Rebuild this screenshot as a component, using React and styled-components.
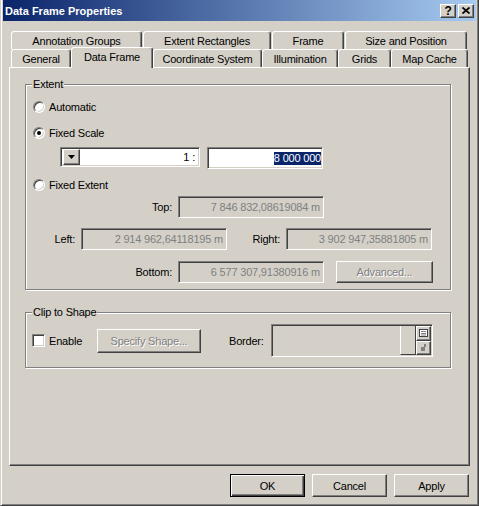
import React from 'react';
import styled, { createGlobalStyle } from 'styled-components';

const GlobalStyle = createGlobalStyle`
  html, body { margin: 0; padding: 0; background: #d4d0c8; }
  body { font-family: "Liberation Sans", Arial, sans-serif; font-size: 11px; }
`;

const Window = styled.div`
  box-sizing: border-box;
  width: 479px;
  height: 506px;
  display: flex;
  flex-direction: column;
  padding: 0 2px 2px 2px;
  background: #d4d0c8;
  border: 1px solid;
  border-top: none;
  border-color: #d4d0c8 #404040 #404040 #d4d0c8;
  box-shadow: inset 1px 0 #fff, inset -1px -1px #808080;
  font-family: "Liberation Sans", Arial, sans-serif;
  font-size: 11px;
  letter-spacing: -0.2px;
  color: #000;
`;

const TitleBar = styled.div`
  flex: none;
  height: 21px;
  display: flex;
  align-items: center;
  gap: 2px;
  padding: 0 2px;
  background: linear-gradient(to right, #0a246a, #a6caf0);
`;

const Title = styled.div`
  flex: 1;
  color: #fff;
  font-weight: bold;
  font-size: 11px;
  letter-spacing: 0;
`;

const raised = `
  border: 1px solid;
  border-color: #fff #404040 #404040 #fff;
  box-shadow: inset -1px -1px #808080, inset 1px 1px #d4d0c8;
`;

const sunken = `
  border: 1px solid;
  border-color: #808080 #fff #fff #808080;
  box-shadow: inset 1px 1px #404040, inset -1px -1px #d4d0c8;
`;

const CaptionButton = styled.div`
  box-sizing: border-box;
  width: 16px;
  height: 14px;
  background: #d4d0c8;
  ${raised}
  display: flex;
  align-items: center;
  justify-content: center;
  font-weight: bold;
  font-size: 12px;
  line-height: 12px;
`;

const TabStrip = styled.div`
  flex: none;
  margin-top: 10px;
  padding-left: 8px;
`;

const TabRow = styled.div`
  display: flex;
  align-items: flex-end;
  height: 18px;
  gap: ${p => p.$gap || 0}px;
`;

const Tab = styled.div`
  box-sizing: border-box;
  flex: none;
  position: relative;
  z-index: ${p => (p.$active ? 2 : 1)};
  width: ${p => p.$w}px;
  height: ${p => (p.$active ? 21 : 18)}px;
  margin-bottom: ${p => (p.$active ? -1 : 0)}px;
  padding-bottom: ${p => (p.$active ? 3 : 0)}px;
  background: #d4d0c8;
  border: 1px solid;
  border-bottom: none;
  border-color: #fff #404040 transparent #fff;
  border-radius: 3px 3px 0 0;
  box-shadow: inset -1px 0 #808080;
  display: flex;
  align-items: center;
  justify-content: center;
  white-space: nowrap;
`;

const Panel = styled.div`
  box-sizing: border-box;
  flex: none;
  height: 399px;
  margin: 0 6px;
  padding: 10px 0 0 15px;
  border: 1px solid;
  border-color: #fff #404040 #404040 #fff;
  box-shadow: inset -1px -1px #808080;
`;

const Group = styled.fieldset`
  box-sizing: border-box;
  width: 426px;
  min-inline-size: 0;
  margin: ${p => p.$mt || 0}px 0 0 0;
  padding: 0 0 ${p => p.$pb}px 6px;
  border: 1px solid #808080;
  box-shadow: inset 1px 1px #fff, 1px 1px #fff;
`;

const Legend = styled.legend`
  position: relative;
  padding: 0 1px;
  line-height: 13px;
  background: #d4d0c8;
`;

const Row = styled.div`
  display: flex;
  align-items: ${p => p.$align || 'center'};
  height: ${p => p.$h}px;
  margin-top: ${p => p.$mt}px;
  margin-left: ${p => p.$ml || 0}px;
`;

const RadioRow = styled.label`
  display: flex;
  align-items: center;
  gap: 4px;
  height: 14px;
  margin-top: ${p => p.$mt}px;
  margin-left: 1px;
`;

const Radio = styled.span`
  box-sizing: border-box;
  width: 12px;
  height: 12px;
  border-radius: 50%;
  background: #fff;
  ${sunken}
  display: flex;
  align-items: center;
  justify-content: center;
  &::after {
    content: "";
    width: 4px;
    height: 4px;
    border-radius: 50%;
    background: ${p => (p.$checked ? '#000' : 'transparent')};
  }
`;

const Combo = styled.div`
  box-sizing: border-box;
  width: 140px;
  height: 20px;
  background: #fff;
  ${sunken}
  display: flex;
  align-items: center;
  padding: 2px;
`;

const DropButton = styled.div`
  box-sizing: border-box;
  width: 17px;
  height: 16px;
  background: #d4d0c8;
  ${raised}
  display: flex;
  align-items: center;
  justify-content: center;
`;

const ComboValue = styled.span`
  flex: 1;
  text-align: right;
  padding-right: 2px;
`;

const Field = styled.div`
  box-sizing: border-box;
  width: ${p => p.$w}px;
  height: ${p => p.$h || 22}px;
  margin-left: ${p => p.$ml || 0}px;
  background: ${p => (p.$disabled ? '#d4d0c8' : '#fff')};
  color: ${p => (p.$disabled ? '#808080' : '#000')};
  ${sunken}
  display: flex;
  align-items: center;
  justify-content: flex-end;
  padding-right: ${p => (p.$disabled ? 3 : 1)}px;
  white-space: nowrap;
  overflow: hidden;
`;

const Selection = styled.span`
  background: #0a246a;
  color: #fff;
  line-height: 13px;
`;

const FieldLabel = styled.span`
  flex: none;
  width: ${p => p.$w}px;
  margin-right: 6px;
  text-align: right;
`;

const Button = styled.div`
  box-sizing: border-box;
  flex: none;
  width: ${p => p.$w}px;
  height: ${p => p.$h || 23}px;
  margin-left: ${p => p.$ml || 0}px;
  background: #d4d0c8;
  display: flex;
  align-items: center;
  justify-content: center;
  white-space: nowrap;
  color: ${p => (p.$disabled ? '#808080' : '#000')};
  text-shadow: ${p => (p.$disabled ? '1px 1px #fff' : 'none')};
  ${p =>
    p.$default
      ? `border: 1px solid #000;
         box-shadow: inset 1px 1px #fff, inset -1px -1px #404040, inset -2px -2px #808080;`
      : raised}
`;

const Checkbox = styled.span`
  box-sizing: border-box;
  width: 13px;
  height: 13px;
  background: #fff;
  ${sunken}
`;

const CheckLabel = styled.label`
  flex: none;
  display: flex;
  align-items: center;
  gap: 4px;
  width: 65px;
`;

const BorderLabel = styled.span`
  flex: none;
  width: 42px;
  margin-left: 28px;
`;

const BorderPicker = styled.div`
  box-sizing: border-box;
  display: flex;
  width: 162px;
  height: 33px;
  border: 1px solid;
  border-color: #808080 #fff #fff #808080;
  box-shadow: inset 1px 1px #404040;
  padding: 1px;
`;

const Preview = styled.div`
  flex: 1;
  display: flex;
  justify-content: flex-end;
`;

const Slot = styled.div`
  width: 14px;
  border-left: 1px solid #fff;
  border-bottom: 1px solid #404040;
`;

const PickerButtons = styled.div`
  display: flex;
  flex-direction: column;
  border-left: 1px solid #404040;
`;

const PickerButton = styled.div`
  box-sizing: border-box;
  width: 15px;
  height: 15px;
  background: #d4d0c8;
  ${raised}
  display: flex;
  align-items: center;
  justify-content: center;
`;

const Footer = styled.div`
  flex: none;
  display: flex;
  justify-content: flex-end;
  gap: 7px;
  margin-top: 8px;
  padding-right: 7px;
`;

const row1 = [
  ['Annotation Groups', 131],
  ['Extent Rectangles', 128],
  ['Frame', 72],
  ['Size and Position', 122],
];

const row2 = [
  ['General', 60],
  ['Data Frame', 82, true],
  ['Coordinate System', 109],
  ['Illumination', 76],
  ['Grids', 53],
  ['Map Cache', 77],
];

export default function App() {
  return (
    <>
      <GlobalStyle />
      <Window>
        <TitleBar>
          <Title>Data Frame Properties</Title>
          <CaptionButton>?</CaptionButton>
          <CaptionButton>
            <svg width="8" height="7" viewBox="0 0 8 7">
              <path d="M0.5 0.5 L7.5 6.5 M7.5 0.5 L0.5 6.5" stroke="#000" strokeWidth="1.7" />
            </svg>
          </CaptionButton>
        </TitleBar>

        <TabStrip>
          <TabRow $gap={1}>
            {row1.map(([t, w]) => (
              <Tab key={t} $w={w}>{t}</Tab>
            ))}
          </TabRow>
          <TabRow>
            {row2.map(([t, w, a]) => (
              <Tab key={t} $w={w} $active={a}>{t}</Tab>
            ))}
          </TabRow>
        </TabStrip>

        <Panel>
          <Group $pb={6}>
            <Legend>Extent</Legend>
            <RadioRow $mt={9}>
              <Radio />
              Automatic
            </RadioRow>
            <RadioRow $mt={12}>
              <Radio $checked />
              Fixed Scale
            </RadioRow>
            <Row $h={22} $mt={7} $ml={28} $align="flex-start">
              <Combo>
                <DropButton>
                  <svg width="7" height="4" viewBox="0 0 7 4">
                    <path d="M0 0 H7 L3.5 4 Z" fill="#000" />
                  </svg>
                </DropButton>
                <ComboValue>1 :</ComboValue>
              </Combo>
              <Field $w={116} $ml={7}>
                <Selection>8 000 000</Selection>
              </Field>
            </Row>
            <RadioRow $mt={9}>
              <Radio />
              Fixed Extent
            </RadioRow>
            <Row $h={22} $mt={4}>
              <FieldLabel $w={140}>Top:</FieldLabel>
              <Field $w={146} $disabled>7 846 832,08619084 m</Field>
            </Row>
            <Row $h={22} $mt={10}>
              <FieldLabel $w={43}>Left:</FieldLabel>
              <Field $w={146} $disabled>2 914 962,64118195 m</Field>
              <FieldLabel $w={53}>Right:</FieldLabel>
              <Field $w={146} $disabled>3 902 947,35881805 m</Field>
            </Row>
            <Row $h={22} $mt={11}>
              <FieldLabel $w={140}>Bottom:</FieldLabel>
              <Field $w={146} $disabled>6 577 307,91380916 m</Field>
              <Button $w={97} $h={22} $ml={12} $disabled>Advanced...</Button>
            </Row>
          </Group>

          <Group $mt={16} $pb={10}>
            <Legend>Clip to Shape</Legend>
            <Row $h={33} $mt={5}>
              <CheckLabel>
                <Checkbox />
                Enable
              </CheckLabel>
              <Button $w={104} $h={24} $disabled>Specify Shape...</Button>
              <BorderLabel>Border:</BorderLabel>
              <BorderPicker>
                <Preview>
                  <Slot />
                </Preview>
                <PickerButtons>
                  <PickerButton>
                    <svg width="9" height="8" viewBox="0 0 9 8">
                      <rect x="0.5" y="0.5" width="8" height="7" fill="#fff" stroke="#404040" />
                      <path d="M2 2.5 H7 M2 4.5 H7 M2 6 H7" stroke="#808080" />
                    </svg>
                  </PickerButton>
                  <PickerButton>
                    <svg width="6" height="7" viewBox="0 0 6 7">
                      <rect x="3" y="0" width="2" height="3" fill="#808080" />
                      <rect x="0" y="3" width="4" height="4" fill="#808080" />
                    </svg>
                  </PickerButton>
                </PickerButtons>
              </BorderPicker>
            </Row>
          </Group>
        </Panel>

        <Footer>
          <Button $w={75} $default>OK</Button>
          <Button $w={75}>Cancel</Button>
          <Button $w={75}>Apply</Button>
        </Footer>
      </Window>
    </>
  );
}
